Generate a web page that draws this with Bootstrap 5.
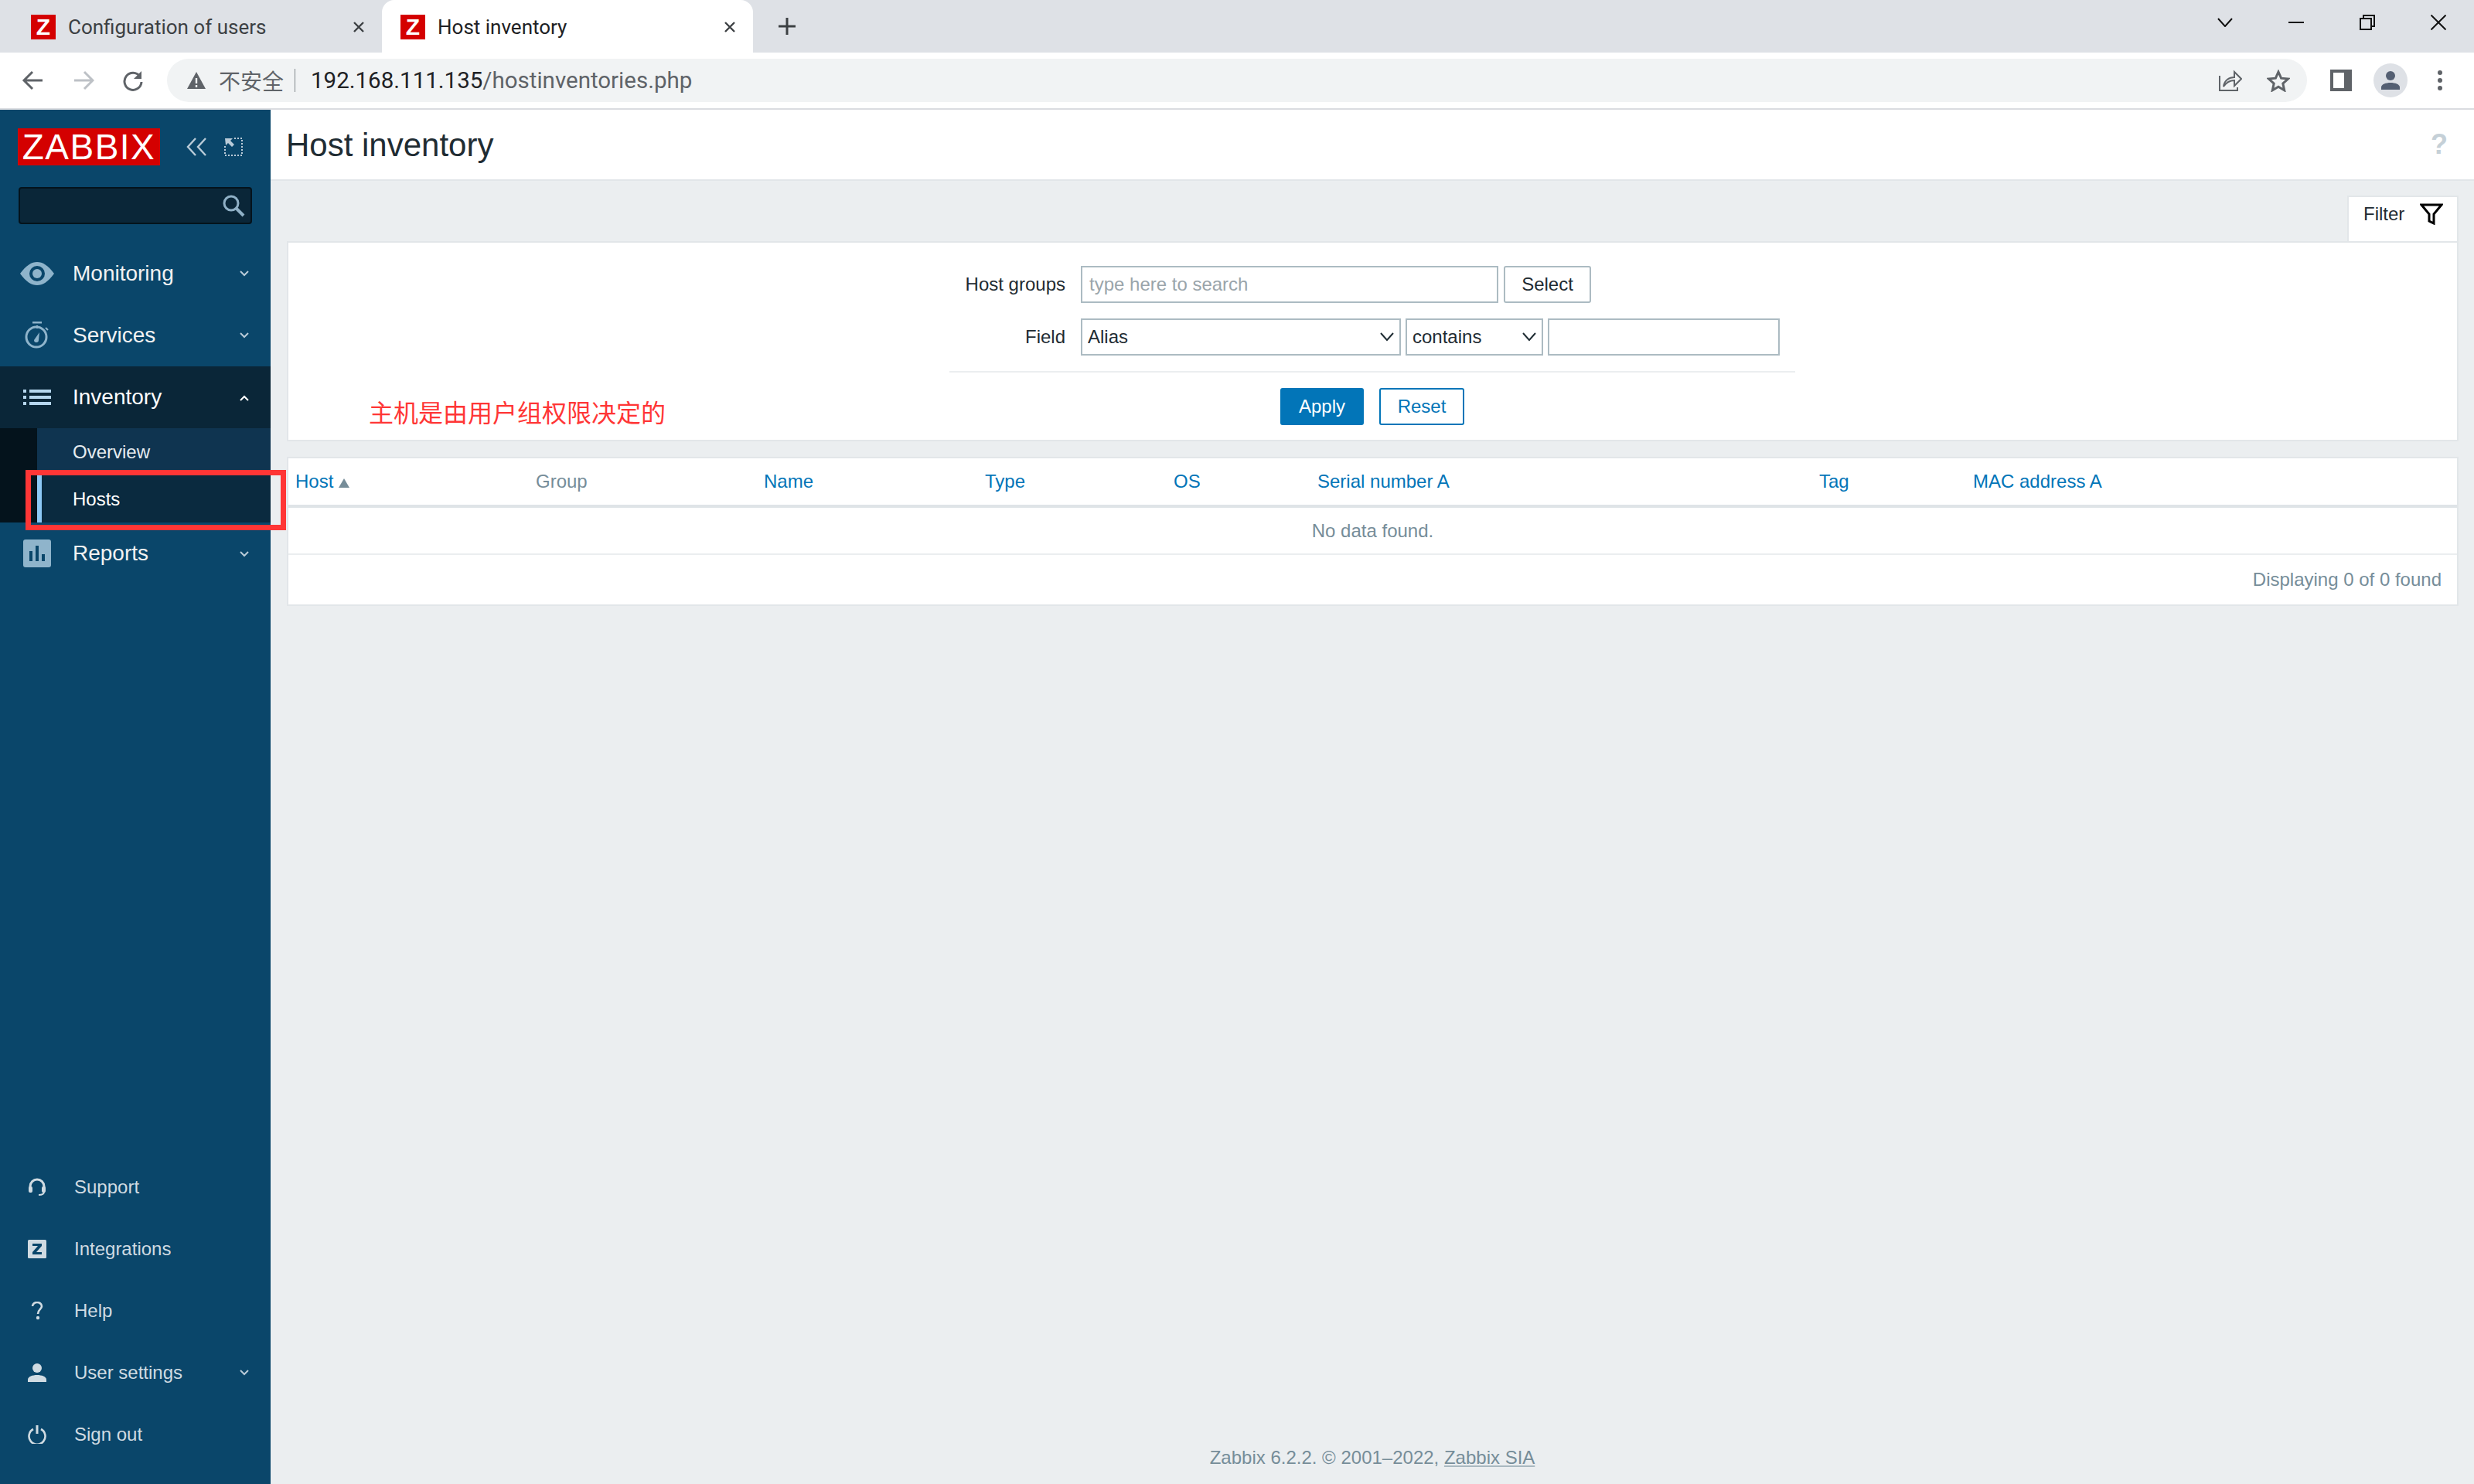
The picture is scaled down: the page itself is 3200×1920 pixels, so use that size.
<!DOCTYPE html>
<html lang="en">
<head>
    <meta charset="UTF-8">
    <meta name="viewport" content="width=device-width, initial-scale=1">
    <title>Host inventory</title>
    <link href="https://cdn.jsdelivr.net/npm/bootstrap@5.3.0/dist/css/bootstrap.min.css" rel="stylesheet">
    <style>
        html, body { height: 1920px; overflow: hidden; }
        body { font-family: "Liberation Sans", Arial, sans-serif; font-size: 24px; background: #ebeef0; color: #1f2c33; }

        /* browser chrome */
        .tab-strip { height: 68px; background: #dee1e6; font-family: Roboto, sans-serif; font-size: 26px; color: #3c4043; }
        .br-tab { width: 480px; height: 68px; padding: 2px 22px 0 24px; }
        .br-tab.first { width: 494px; padding-left: 40px; }
        .br-tab.current { background: #fff; border-radius: 16px 16px 0 0; color: #202124; }
        .fav { width: 32px; height: 32px; background: #d40000; color: #fff; font: bold 30px/32px "Liberation Sans", sans-serif; text-align: center; flex: none; margin-right: 16px; }
        .plus-btn { margin-left: 32px; }
        .win-btns { margin-left: auto; padding: 0 36px 10px 0; gap: 72px; }
        .tool-row { height: 74px; background: #fff; border-bottom: 2px solid #dadce0; padding-left: 28px; }
        .addr { margin-left: 30px; width: 2768px; height: 56px; background: #f1f3f4; border-radius: 28px; padding: 0 22px 0 25px; font-family: Roboto, sans-serif; font-size: 29.5px; color: #5f6368; }
        .addr .cn { font-family: "Noto Sans CJK SC", sans-serif; font-size: 28px; margin: 0 14px 0 16px; }
        .addr .sep { width: 1px; height: 30px; background: #80868b; margin-right: 20px; }
        .addr b { font-weight: 400; color: #202124; }

        /* app */
        .zbx-app { height: 1778px; }
        .zbx-side { width: 350px; flex: none; background: #0a466a; color: #f2f2f2; }
        .zbx-logo { width: 184px; height: 48px; background: #d40000; color: #fff; font-size: 46px; line-height: 48px; text-align: center; letter-spacing: 1.5px; }
        .zbx-search { width: 302px; height: 48px; margin: 28px 0 23px 24px; background: #0a2638; border: 2px solid #04131c; border-radius: 4px; padding-right: 7px; }
        .menu-row { height: 80px; font-size: 28px; color: #f2f2f2; position: relative; padding-top: 1px; }
        .menu-row .ico { width: 94px; flex: none; display: flex; justify-content: center; padding-left: 2px; }
        .menu-row .chev { position: absolute; left: 310px; top: 50%; margin-top: -3px; }
        .menu-row.open { background: #0a2638; color: #fff; padding-top: 0; }
        .menu-row.flat { padding-top: 0; }
        .menu-low { font-size: 24px; color: #d0dbe2; }
        .menu-low .ico { width: 96px; padding-left: 0; }
        .sub-wrap { background: #04131c; padding-left: 48px; }
        .sub-row { height: 61px; padding-left: 46px; background: #0f3450; color: #e6ecf0; display: flex; align-items: center; position: relative; }
        .sub-row.on { background: #0a2a3f; color: #fff; border-left: 6px solid #8cc8f5; padding-left: 40px; }
        .red-frame { position: absolute; left: -21px; top: -7px; width: 337px; height: 78px; border: 7px solid #ff3636; pointer-events: none; }

        .zbx-main { min-width: 0; }
        .page-head { height: 92px; background: #fff; border-bottom: 2px solid #e2e6e9; padding: 0 34px 0 20px; font-size: 42px; color: #1f2c33; }
        .help-mark { font-size: 36px; font-weight: bold; color: #c5d0d7; line-height: 1; }
        .main-pad { padding: 19px 20px 0 21px; }
        .filter-tab { width: 144px; height: 60px; background: #fff; border: 2px solid #e2e6e9; border-bottom: 0; padding: 0 0 14px 19px; margin-left: auto; gap: 20px; }
        .filter-box { height: 259px; background: #fff; border: 2px solid #e2e6e9; margin-top: -1px; position: relative; }
        .form-area { width: 1094px; margin-left: 855px; padding-top: 30px; }
        .f-row { height: 48px; margin-bottom: 20px; }
        .f-label { width: 150px; text-align: right; margin-right: 20px; flex: none; }
        .zinp { height: 48px; border: 2px solid #acbbc2; border-radius: 0; padding: 0 9px; font-size: 24px; color: #1f2c33; box-shadow: none; line-height: 1; }
        .zinp::placeholder { color: #9aa5ab; }
        .zsel { height: 48px; border: 2px solid #acbbc2; border-radius: 0; padding: 0 24px 0 7px; font-size: 24px; color: #1f2c33; background-size: 20px 12px; background-position: right 6px center; background-image: url("data:image/svg+xml,%3Csvg xmlns='http://www.w3.org/2000/svg' viewBox='0 0 20 12'%3E%3Cpath d='M2 1l8 9 8-9' fill='none' stroke='%231f2c33' stroke-width='2'/%3E%3C/svg%3E"); }
        .zsel-op { width: 178px; margin-left: 6px; }
        .zbtn { height: 48px; font-size: 24px; line-height: 44px; padding: 0; border-radius: 3px; border-width: 2px; }
        .zbtn-grey { background: #fff; border-color: #acbbc2; color: #1f2c33; width: 113px; margin-left: 7px; }
        .zbtn-blue { background: #0275b8; border-color: #0275b8; color: #fff; width: 108px; }
        .zbtn-line { background: #fff; border-color: #0275b8; color: #0275b8; width: 110px; margin-left: 20px; }
        .f-rule { height: 2px; background: #ebeef0; margin-bottom: 20px; margin-top: 0; }
        .note-red { position: absolute; left: 104px; top: 195px; font-family: "Noto Sans CJK SC", sans-serif; font-size: 32px; line-height: 46px; color: #ff3636; }

        .list-box { margin-top: 20px; background: #fff; border: 2px solid #e2e6e9; }
        .inv-table { table-layout: fixed; width: 2805px; margin: 0; font-size: 24px; }
        .inv-table th { height: 62px; font-weight: 400; padding: 0 0 0 9px; vertical-align: middle; border-bottom: 4px solid #dfe4e7; color: #0275b8; }
        .inv-table th.plain { color: #768d99; }
        .inv-table td { height: 62px; text-align: center; vertical-align: middle; color: #768d99; padding: 0; border-bottom: 2px solid #ebeef0; }
        .paging-row { height: 64px; padding-right: 20px; color: #768d99; }
        .zbx-foot { margin-top: auto; height: 52px; text-align: center; color: #768d99; }
        .zbx-foot a { color: #768d99; text-decoration: underline; text-decoration-color: #a9b8c0; }
    </style>
</head>
<body>
    <div class="tab-strip d-flex align-items-center">
        <div class="br-tab first d-flex align-items-center">
            <span class="fav">Z</span><span>Configuration of users</span>
            <svg class="ms-auto" width="16" height="16" viewBox="0 0 16 16"><path d="M2 2l12 12M14 2L2 14" stroke="#3c4043" stroke-width="2.4"/></svg>
        </div>
        <div class="br-tab current d-flex align-items-center">
            <span class="fav">Z</span><span>Host inventory</span>
            <svg class="ms-auto" width="16" height="16" viewBox="0 0 16 16"><path d="M2 2l12 12M14 2L2 14" stroke="#3c4043" stroke-width="2.4"/></svg>
        </div>
        <svg class="plus-btn" width="24" height="24" viewBox="0 0 24 24"><path d="M12 1v22M1 12h22" stroke="#3c4043" stroke-width="3"/></svg>
        <div class="win-btns d-flex align-items-center">
            <svg width="20" height="12" viewBox="0 0 20 12"><path d="M1 1l9 10 9-10" fill="none" stroke="#111" stroke-width="2"/></svg>
            <svg width="20" height="2" viewBox="0 0 20 2"><path d="M0 1h20" stroke="#111" stroke-width="2"/></svg>
            <svg width="20" height="20" viewBox="0 0 20 20"><path d="M1 5h14v14H1zM5 5V1h14v14h-4" fill="none" stroke="#111" stroke-width="2"/></svg>
            <svg width="20" height="20" viewBox="0 0 20 20"><path d="M0.5 0.5l19 19M19.5 0.5l-19 19" stroke="#111" stroke-width="2"/></svg>
        </div>
    </div>
    <div class="tool-row d-flex align-items-center">
        <svg width="28" height="28" viewBox="0 0 28 28"><path d="M27 14H4M14 3L3 14l11 11" fill="none" stroke="#5f6368" stroke-width="3"/></svg>
        <svg style="margin-left:38px" width="28" height="28" viewBox="0 0 28 28"><path d="M2 14h23M15 3l11 11-11 11" fill="none" stroke="#bdc1c6" stroke-width="3"/></svg>
        <svg style="margin-left:36px" width="28" height="28" viewBox="0 0 28 28"><path d="M23 9a11 11 0 1 0 2 7" fill="none" stroke="#5f6368" stroke-width="3"/><path d="M25 2v10H15z" fill="#5f6368"/></svg>
        <div class="addr d-flex align-items-center">
            <svg width="26" height="24" viewBox="0 0 26 24"><path d="M13 1L25 23H1z" fill="#5f6368"/><path d="M13 9v7M13 18v3" stroke="#f1f3f4" stroke-width="2.4"/></svg>
            <span class="cn">不安全</span><span class="sep"></span>
            <span><b>192.168.111.135</b>/hostinventories.php</span>
            <svg class="ms-auto" width="30" height="28" viewBox="0 0 30 28" style="margin-right:32px"><path d="M1 8v19h23v-4" fill="none" stroke="#5f6368" stroke-width="2"/><path d="M6 22c1-8 7-12 14-12V3l9 9-9 9v-7c-6 0-10 2-14 8z" fill="none" stroke="#5f6368" stroke-width="2"/></svg>
            <svg width="30" height="29" viewBox="0 0 30 29"><path d="M15 3l3.6 8.2 8.9.9-6.7 6 1.9 8.7L15 22.3l-7.7 4.5 1.9-8.7-6.7-6 8.9-.9z" fill="none" stroke="#5f6368" stroke-width="3"/></svg>
        </div>
        <svg style="margin-left:30px" width="28" height="28" viewBox="0 0 28 28"><path d="M0 0h28v28H0z" fill="#5f6368"/><path d="M4 4h14v20H4z" fill="#fff"/></svg>
        <svg style="margin-left:28px" width="44" height="44" viewBox="0 0 44 44"><circle cx="22" cy="22" r="22" fill="#dee1e6"/><circle cx="22" cy="16" r="6" fill="#545f72"/><path d="M10 34v-3c0-4 6-6 12-6s12 2 12 6v3z" fill="#545f72"/></svg>
        <svg style="margin-left:38px" width="8" height="28" viewBox="0 0 8 28"><circle cx="4" cy="4" r="3" fill="#5f6368"/><circle cx="4" cy="14" r="3" fill="#5f6368"/><circle cx="4" cy="24" r="3" fill="#5f6368"/></svg>
    </div>

    <div class="zbx-app d-flex">
        <aside class="zbx-side d-flex flex-column">
            <div class="d-flex align-items-center" style="padding:24px 0 0 23px">
                <div class="zbx-logo">ZABBIX</div>
                <svg style="margin-left:33px" width="28" height="24" viewBox="0 0 28 24"><path d="M13 1L3 12l10 11M26 1L16 12l10 11" fill="none" stroke="#b9cbd8" stroke-width="2.4"/></svg>
                <svg style="margin-left:22px" width="24" height="24" viewBox="0 0 24 24"><path d="M13 1h10v22H1V11" fill="none" stroke="#b9cbd8" stroke-width="2" stroke-dasharray="2 2"/><path d="M1 1h10L8 4l5 5-3 3-5-5-3 3z" fill="#b9cbd8"/></svg>
            </div>
            <div class="zbx-search d-flex align-items-center justify-content-end">
                <svg width="30" height="30" viewBox="0 0 30 30"><circle cx="12" cy="12" r="9" fill="none" stroke="#8fb0c6" stroke-width="3"/><path d="M18 18l10 10" stroke="#8fb0c6" stroke-width="4"/></svg>
            </div>

            <div class="menu-row d-flex align-items-center">
                <span class="ico"><svg width="44" height="30" viewBox="0 0 44 30"><path d="M0 15C8 4 15 0 22 0s14 4 22 15C36 26 29 30 22 30S8 26 0 15z" fill="#8fb4cb"/><circle cx="22" cy="15" r="10" fill="#0a466a"/><circle cx="22" cy="15" r="6" fill="#8fb4cb"/></svg></span>Monitoring
                <svg class="chev" width="12" height="8" viewBox="0 0 12 8"><path d="M1 1l5 5 5-5" fill="none" stroke="#b9cbd8" stroke-width="2"/></svg>
            </div>
            <div class="menu-row d-flex align-items-center">
                <span class="ico"><svg width="32" height="36" viewBox="0 0 32 36"><path d="M10 1h12" stroke="#8fb4cb" stroke-width="3"/><circle cx="15" cy="20" r="13" fill="none" stroke="#8fb4cb" stroke-width="3"/><path d="M16 5v4M27 8l3 3" stroke="#8fb4cb" stroke-width="2"/><path d="M12 24l7-10-1 10a3 3 0 0 1-6 0z" fill="#8fb4cb"/></svg></span>Services
                <svg class="chev" width="12" height="8" viewBox="0 0 12 8"><path d="M1 1l5 5 5-5" fill="none" stroke="#b9cbd8" stroke-width="2"/></svg>
            </div>
            <div class="menu-row open d-flex align-items-center" style="margin-top:1px">
                <span class="ico"><svg width="36" height="20" viewBox="0 0 36 20"><path d="M0 0h4v4H0zM8 0h28v4H8zM0 8h4v4H0zM8 8h28v4H8zM0 16h4v4H0zM8 16h28v4H8z" fill="#b5d6ee"/></svg></span>Inventory
                <svg class="chev" width="12" height="8" viewBox="0 0 12 8"><path d="M1 7l5-5 5 5" fill="none" stroke="#fff" stroke-width="2"/></svg>
            </div>
            <div class="sub-wrap">
                <div class="sub-row">Overview</div>
                <div class="sub-row on">Hosts<div class="red-frame"></div></div>
            </div>
            <div class="menu-row flat d-flex align-items-center">
                <span class="ico"><svg width="36" height="36" viewBox="0 0 36 36"><rect width="36" height="36" rx="3" fill="#8fb4cb"/><path d="M8 15h4v13H8zM16 8h4v20h-4zM24 19h4v9h-4z" fill="#0a466a"/></svg></span>Reports
                <svg class="chev" width="12" height="8" viewBox="0 0 12 8"><path d="M1 1l5 5 5-5" fill="none" stroke="#b9cbd8" stroke-width="2"/></svg>
            </div>

            <div class="mt-auto" style="padding-bottom:25px">
                <div class="menu-row menu-low d-flex align-items-center">
                    <span class="ico"><svg width="24" height="24" viewBox="0 0 24 24"><path d="M3 13v-2a9 9 0 0 1 18 0v2" fill="none" stroke="#d0dbe2" stroke-width="3"/><rect x="1" y="11" width="5" height="8" rx="2" fill="#d0dbe2"/><rect x="18" y="11" width="5" height="8" rx="2" fill="#d0dbe2"/><path d="M21 18c0 3-3 4-7 4" fill="none" stroke="#d0dbe2" stroke-width="2"/></svg></span>Support
                </div>
                <div class="menu-row menu-low d-flex align-items-center">
                    <span class="ico"><svg width="24" height="24" viewBox="0 0 24 24"><rect width="24" height="24" rx="1.5" fill="#d0dbe2"/><path d="M6 5h12v3l-7 8h7v3H6v-3l7-8H6z" fill="#0a466a"/></svg></span>Integrations
                </div>
                <div class="menu-row menu-low d-flex align-items-center">
                    <span class="ico"><svg width="16" height="24" viewBox="0 0 16 24"><path d="M2 6c0-3 3-5 6-5s6 2 6 5c0 4-5 4-5 10" fill="none" stroke="#d0dbe2" stroke-width="2.6"/><circle cx="9" cy="21" r="2.2" fill="#d0dbe2"/></svg></span>Help
                </div>
                <div class="menu-row menu-low d-flex align-items-center">
                    <span class="ico"><svg width="24" height="24" viewBox="0 0 24 24"><circle cx="12" cy="6" r="6" fill="#d0dbe2"/><path d="M0 24v-3c0-4 6-6 12-6s12 2 12 6v3z" fill="#d0dbe2"/></svg></span>User settings
                    <svg class="chev" width="12" height="8" viewBox="0 0 12 8"><path d="M1 1l5 5 5-5" fill="none" stroke="#b9cbd8" stroke-width="2"/></svg>
                </div>
                <div class="menu-row menu-low d-flex align-items-center">
                    <span class="ico"><svg width="24" height="24" viewBox="0 0 24 24"><path d="M7 5a10.5 10.5 0 1 0 10 0" fill="none" stroke="#d0dbe2" stroke-width="2.6"/><path d="M12 0v11" stroke="#d0dbe2" stroke-width="3"/></svg></span>Sign out
                </div>
            </div>
        </aside>

        <main class="zbx-main flex-grow-1 d-flex flex-column">
            <div class="page-head d-flex align-items-center justify-content-between">
                <span>Host inventory</span>
                <span class="help-mark">?</span>
            </div>
            <div class="main-pad">
                <div class="filter-tab d-flex align-items-center">
                    <span>Filter</span>
                    <svg width="30" height="28" viewBox="0 0 30 28"><path d="M2 2h26L18 14v12l-6-3v-9z" fill="none" stroke="#000" stroke-width="3"/></svg>
                </div>
                <div class="filter-box">
                    <div class="form-area">
                        <div class="f-row d-flex align-items-center">
                            <label class="f-label">Host groups</label>
                            <input class="form-control zinp" style="width:540px" placeholder="type here to search">
                            <button class="btn zbtn zbtn-grey">Select</button>
                        </div>
                        <div class="f-row d-flex align-items-center">
                            <label class="f-label">Field</label>
                            <select class="form-select zsel" style="width:414px"><option>Alias</option></select>
                            <select class="form-select zsel zsel-op"><option>contains</option></select>
                            <input class="form-control zinp" style="width:300px;margin-left:6px">
                        </div>
                        <div class="f-rule"></div>
                        <div class="d-flex" style="padding-left:428px">
                            <button class="btn zbtn zbtn-blue">Apply</button>
                            <button class="btn zbtn zbtn-line">Reset</button>
                        </div>
                    </div>
                    <div class="note-red">主机是由用户组权限决定的</div>
                </div>
                <div class="list-box">
                    <table class="table inv-table">
                        <colgroup>
                            <col style="width:311px"><col style="width:295px"><col style="width:286px"><col style="width:244px"><col style="width:186px"><col style="width:649px"><col style="width:199px"><col>
                        </colgroup>
                        <thead>
                            <tr>
                                <th>Host <svg width="14" height="12" viewBox="0 0 14 12"><path d="M7 0l7 12H0z" fill="#768d99"/></svg></th>
                                <th class="plain">Group</th>
                                <th>Name</th>
                                <th>Type</th>
                                <th>OS</th>
                                <th>Serial number A</th>
                                <th>Tag</th>
                                <th>MAC address A</th>
                            </tr>
                        </thead>
                        <tbody>
                            <tr><td colspan="8">No data found.</td></tr>
                        </tbody>
                    </table>
                    <div class="paging-row d-flex align-items-center justify-content-end">Displaying 0 of 0 found</div>
                </div>
            </div>
            <div class="zbx-foot">Zabbix 6.2.2. © 2001–2022, <a href="#">Zabbix SIA</a></div>
        </main>
    </div>
    <script src="https://cdn.jsdelivr.net/npm/bootstrap@5.3.0/dist/js/bootstrap.bundle.min.js"></script>
</body>
</html>
